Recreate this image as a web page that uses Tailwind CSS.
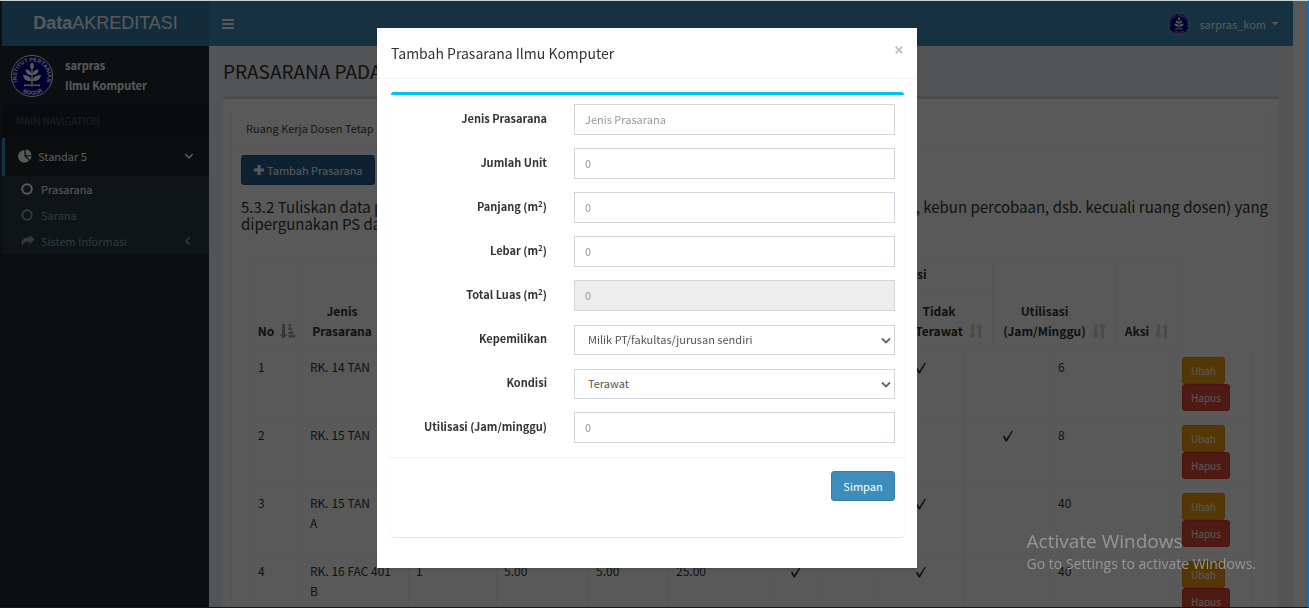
<!DOCTYPE html>
<html lang="id">
<head>
<meta charset="utf-8">
<meta name="viewport" content="width=device-width, initial-scale=1">
<title>DataAKREDITASI</title>
<script src="https://cdn.jsdelivr.net/npm/@tailwindcss/browser@4"></script>
</head>
<body class="h-screen overflow-hidden bg-[#222d32] font-['Noto_Sans_CJK_SC','Noto_Sans',sans-serif] text-[11px] leading-5 text-[#333]">

<svg class="hidden" aria-hidden="true">
  <symbol id="seal" viewBox="0 0 42 42">
    <circle cx="21" cy="21" r="20.500" fill="#00008b" stroke="#fff" stroke-width="1"/>
    <path id="arcTop" d="M7.500 29.500 A15.500 15.500 0 1 1 34.500 29.500" fill="none"/>
    <path id="arcBottom" d="M9 35.500 A19 19 0 0 0 33 35.500" fill="none"/>
    <text font-size="5.500" fill="#fff" font-family="Liberation Sans"><textPath href="#arcTop" startOffset="5%">INSTITUT PERTANIAN</textPath></text>
    <text font-size="5.500" fill="#fff" font-family="Liberation Sans"><textPath href="#arcBottom" startOffset="13%">BOGOR</textPath></text>
    <g fill="#fff">
      <path d="M20.300 14h1.400v16h-1.400z"/>
      <path d="M21 7.500c2.600 2 2.600 5 0 7c-2.600-2-2.600-5 0-7z"/>
      <path d="M20.500 20c-3.500 0-6-2-6-5.500c3.500 0 6 2 6 5.500zM21.500 20c3.500 0 6-2 6-5.500c-3.500 0-6 2-6 5.500z"/>
      <path d="M20.500 26c-5 .5-8-2-8.500-6c5 0 8 2 8.500 6zM21.500 26c5 .5 8-2 8.500-6c-5 0-8 2-8.500 6z"/>
      <path d="M13 30q4-1.500 8 0q4-1.500 8 0v1.400q-4-1.500-8 .2q-4-1.700-8-.2z"/>
    </g>
  </symbol>
  <symbol id="sort" viewBox="0 0 14 16">
    <path d="M2 1h3v10.500h2.500L3.500 15.500L-.5 11.500H2zM9 15.500h3V4.500h2.500L10.500.5L6.500 4.500H9z"/>
  </symbol>
  <symbol id="sort-asc" viewBox="0 0 15 16">
    <path d="M2 1h3v10.500h2.500L3.500 15.500L-.5 11.500H2zM8.500 1h2.500v2.500H8.500zM8.500 4.500h3.500v2.500H8.500zM8.500 8.500h5v2.500h-5zM8.500 12h6.500v2.500H8.500z"/>
  </symbol>
  <symbol id="check" viewBox="0 0 12 12">
    <path d="M.8 6.500L2.400 5.800L4.300 9L9.800.8L11 1L5 11.500L3.700 11.500z" fill="#333"/>
  </symbol>
</svg>

<div class="flex h-full border-t border-r border-b border-l-2 border-transparent">
  <aside class="w-[207px] shrink-0 bg-[#222d32]">
    <a href="#" class="flex h-[45px] items-center justify-center bg-[#367fa9] pb-0.5 font-['Liberation_Sans',sans-serif] text-lg text-white"><b>Data</b>AKREDITASI</a>
    <div class="flex h-[59px] items-center gap-3 px-[9px] font-bold text-white">
      <svg class="size-[42px]" role="img" aria-label="Logo"><use href="#seal"/></svg>
      <div class="pb-0.5"><p>sarpras</p><p>Ilmu Komputer</p></div>
    </div>
    <nav>
      <h2 class="flex h-[33px] items-center bg-[#1a2226] pb-0.5 pl-[14px] text-[10px] text-[#4b646f]">MAIN NAVIGATION</h2>
      <a href="#" class="flex h-[38px] items-center border-l-3 border-[#3c8dbc] bg-[#1e282c] pr-[15px] pb-0.5 pl-[13px] text-white">
        <svg class="mr-1.5 size-[14px]" viewBox="0 0 14 14" fill="#fff"><path d="M6.500 1v6.300l4.500 4.300A6.300 6.300 0 1 1 6.500 1z"/><path d="M7.800.5a6.200 6.200 0 0 1 5.700 5.800H7.800z"/><path d="M8.600 7.300H13.500A6 6 0 0 1 12 10.900z"/></svg>
        <span class="grow">Standar 5</span>
        <svg class="size-[10px]" viewBox="0 0 10 10" fill="none" stroke="#fff" stroke-width="1.700"><path d="M1.200 3L5 6.800L8.800 3"/></svg>
      </a>
      <ul class="bg-[#2c3b41] text-[#8aa4af]">
        <li><a href="#" class="flex h-[26px] items-center gap-2 pl-[19px] text-white"><svg class="size-3" viewBox="0 0 12 12" fill="none" stroke="currentColor" stroke-width="2"><circle cx="6" cy="6" r="4.800"/></svg>Prasarana</a></li>
        <li><a href="#" class="flex h-[26px] items-center gap-2 pl-[19px]"><svg class="size-3" viewBox="0 0 12 12" fill="none" stroke="currentColor" stroke-width="2"><circle cx="6" cy="6" r="4.800"/></svg>Sarana</a></li>
        <li><a href="#" class="flex h-[26px] items-center gap-1.5 pr-4 pl-[19px]"><svg class="h-3 w-[14px]" viewBox="0 0 14 12" fill="currentColor"><path d="M8.500 0L13.800 4.500L8.500 9.500V6.800C4.500 6.800 2 7.500 1.500 11.500C-1 6 2 2.500 8.500 2.500z"/></svg><span class="grow">Sistem Informasi</span><svg class="size-[10px]" viewBox="0 0 10 10" fill="none" stroke="currentColor" stroke-width="1.400"><path d="M6.800 1.200L3 5L6.800 8.800"/></svg></a></li>
      </ul>
    </nav>
  </aside>

  <div class="flex min-w-0 grow flex-col bg-[#ecf0f5]">
    <header class="flex h-[45px] shrink-0 items-center justify-between bg-[#3c8dbc] pr-[14px] pl-[13px] text-white">
      <button type="button" aria-label="Menu"><svg class="h-[10px] w-3" viewBox="0 0 12 10" fill="#fff"><path d="M0 0h12v2H0zM0 4h12v2H0zM0 8h12v2H0z"/></svg></button>
      <button type="button" class="flex items-center"><svg class="mr-[9px] size-[22px]"><use href="#seal"/></svg>sarpras_kom<svg class="ml-[5px] h-1 w-2" viewBox="0 0 8 4" fill="#fff"><path d="M.5 0h7L4 3.500z"/></svg></button>
    </header>
    <main class="min-h-0 grow overflow-hidden px-[14px]">
      <h1 class="mt-3 mb-3 h-[26px] text-[19px] leading-[26px] whitespace-nowrap">PRASARANA PADA PROGRAM STUDI ILMU KOMPUTER</h1>
      <section class="rounded-[3px] border-t-3 border-[#d2d6de] bg-white px-2 pt-[11px] pb-8">
        <div class="border-x border-[#f4f4f4]">
          <div class="flex h-9 items-center border-b border-[#f4f4f4] pl-[14px] text-[#444]"><a href="#">Ruang Kerja Dosen Tetap</a></div>
          <div class="pt-[9px] pl-[9px]">
            <button type="button" class="flex h-[30px] items-center gap-0.5 rounded-[3px] border border-[#204d74] bg-[#286090] px-[11px] text-white"><svg class="size-3" viewBox="0 0 12 12" fill="#fff"><path d="M4.500 1h3v3.500H11v3H7.500V11h-3V7.500H1v-3h3.500z"/></svg>Tambah Prasarana</button>
            <p class="mt-[13px] text-[15px] leading-[17px]">5.3.2 Tuliskan data prasarana (kantor, ruang kelas, ruang laboratorium, aula, ruang perpustakaan, kebun percobaan, dsb. kecuali ruang dosen) yang dipergunakan PS dalam proses belajar mengajar</p>
            <div class="mt-[25px] ml-[9px] text-[12px]">
              <table class="w-[928px] table-fixed border-separate border-spacing-0 border-t border-l border-[#f4f4f4] text-center font-bold [&_th]:border-r [&_th]:border-b [&_th]:border-[#f4f4f4] [&_th]:px-0 [&_th]:align-bottom [&_svg]:ml-1.5 [&_svg]:inline [&_svg]:align-text-bottom [&_svg]:fill-[#d6d6d6]">
                <colgroup><col class="w-[52px]"><col class="w-[99px]"><col class="w-[95px]"><col class="w-[92px]"><col class="w-[80px]"><col class="w-[148px]"><col class="w-[89px]"><col class="w-[87px]"><col class="w-[124px]"><col></colgroup>
                <thead>
                  <tr class="h-[35px]">
                    <th rowspan="2" class="pb-2">No<svg class="h-4 w-[15px] brightness-75"><use href="#sort-asc"/></svg></th>
                    <th rowspan="2" class="pb-2"><span class="mr-5">Jenis</span><br>Prasarana<svg class="h-4 w-[14px]"><use href="#sort"/></svg></th>
                    <th rowspan="2" class="pb-2">Unit</th>
                    <th rowspan="2" class="pb-2">Panjang</th>
                    <th rowspan="2" class="pb-2">Lebar</th>
                    <th rowspan="2" class="pb-2">Kepemilikan</th>
                    <th colspan="2" class="pb-2">Kondisi</th>
                    <th rowspan="2" class="pb-2"><span class="mr-5">Utilisasi</span><br>(Jam/Minggu)<svg class="h-4 w-[14px]"><use href="#sort"/></svg></th>
                    <th rowspan="2" class="pb-2">Aksi<svg class="h-4 w-[14px]"><use href="#sort"/></svg></th>
                  </tr>
                  <tr class="h-[57px]">
                    <th class="pb-2">Terawat</th>
                    <th class="pb-2"><span class="mr-5">Tidak</span><br>Terawat<svg class="h-4 w-[14px]"><use href="#sort"/></svg></th>
                  </tr>
                </thead>
              </table>
              <table class="w-[1002px] table-fixed border-separate border-spacing-0 border-l border-[#f4f4f4] [&_td]:h-[68px] [&_td]:border-r [&_td]:border-b [&_td]:border-[#f4f4f4] [&_td]:px-[7px] [&_td]:pt-[7px] [&_td]:align-top [&_td>svg]:mx-auto [&_td>svg]:mt-[5px] [&_td>svg]:size-3 [&_button]:block [&_button]:rounded-[3px] [&_button]:border [&_button]:px-2 [&_button]:text-[10px] [&_button]:leading-[25px] [&_button]:text-white">
                <colgroup><col class="w-[52px]"><col class="w-[106px]"><col class="w-[88px]"><col class="w-[92px]"><col class="w-[80px]"><col class="w-[101px]"><col class="w-[53px]"><col class="w-[55px]"><col class="w-[87px]"><col class="w-[86px]"><col class="w-[124px]"><col></colgroup>
                <tbody>
                  <tr><td>1</td><td>RK. 14 TAN</td><td>1</td><td>5.00</td><td>5.00</td><td>25.00</td><td><svg><use href="#check"/></svg></td><td></td><td><svg><use href="#check"/></svg></td><td></td><td>6</td><td><button type="button" class="border-[#e08e0b] bg-[#f39c12]">Ubah</button><button type="button" class="border-[#d73925] bg-[#dd4b39]">Hapus</button></td></tr>
                  <tr><td>2</td><td>RK. 15 TAN</td><td>1</td><td>5.00</td><td>5.00</td><td>25.00</td><td><svg><use href="#check"/></svg></td><td></td><td></td><td><svg><use href="#check"/></svg></td><td>8</td><td><button type="button" class="border-[#e08e0b] bg-[#f39c12]">Ubah</button><button type="button" class="border-[#d73925] bg-[#dd4b39]">Hapus</button></td></tr>
                  <tr><td>3</td><td>RK. 15 TAN<br>A</td><td>1</td><td>5.00</td><td>5.00</td><td>25.00</td><td><svg><use href="#check"/></svg></td><td></td><td><svg><use href="#check"/></svg></td><td></td><td>40</td><td><button type="button" class="border-[#e08e0b] bg-[#f39c12]">Ubah</button><button type="button" class="border-[#d73925] bg-[#dd4b39]">Hapus</button></td></tr>
                  <tr><td>4</td><td>RK. 16 FAC 401<br>B</td><td>1</td><td>5.00</td><td>5.00</td><td>25.00</td><td><svg><use href="#check"/></svg></td><td></td><td><svg><use href="#check"/></svg></td><td></td><td>40</td><td><button type="button" class="border-[#e08e0b] bg-[#f39c12]">Ubah</button><button type="button" class="border-[#d73925] bg-[#dd4b39]">Hapus</button></td></tr>
                </tbody>
              </table>
            </div>
          </div>
        </div>
      </section>
    </main>
  </div>
  <div class="w-[15px] shrink-0 bg-white"></div>
</div>

<div class="fixed inset-0 flex items-start justify-center overflow-hidden bg-black/65 pt-7 pr-[15px]">
  <form role="dialog" aria-labelledby="dialog-title" class="w-full max-w-[540px] bg-white pb-[31px] shadow-[0_2px_3px_rgba(0,0,0,0.125)]">
    <div class="flex h-[51px] items-center justify-between border-b border-[#f4f4f4] px-[14px]">
      <h2 id="dialog-title" class="text-[14px]">Tambah Prasarana Ilmu Komputer</h2>
      <button type="button" aria-label="Tutup" class="mb-1.5"><svg class="size-2" viewBox="0 0 8 8" stroke="#c4c4c4" stroke-width="2"><path d="M.8.8L7.200 7.200M7.200.8L.8 7.200"/></svg></button>
    </div>
    <div class="mt-[13px] mr-[13px] ml-[14px] rounded-[3px] border-t-3 border-[#00c0ef] pb-9 shadow-[0_1px_1px_rgba(0,0,0,0.1),0_0_1px_rgba(0,0,0,0.1)]">
      <div class="flex flex-col gap-[13px] px-[9px] pt-[9px] [&_input]:h-[31px] [&_input]:min-w-0 [&_input]:grow [&_input]:border [&_input]:border-[#d2d6de] [&_input]:px-[10px] [&_input]:pb-0.5 [&_input]:placeholder-[#999] [&_label]:w-[147px] [&_label]:shrink-0 [&_label]:self-center [&_label]:pb-[3px] [&_label]:text-right [&_label]:font-bold [&_select]:block [&_select]:h-[30px] [&_select]:w-full [&_select]:appearance-none [&_select]:border [&_select]:border-[#d2d6de] [&_select]:bg-white [&_select]:px-[13px] [&_select]:pb-0.5 [&_select]:text-[#555] [&_sup]:text-[8px] [&>div]:flex [&>div]:h-[31px] [&>div]:items-end [&>div]:gap-[27px]">
        <div><label for="jenis">Jenis Prasarana</label><input id="jenis" type="text" placeholder="Jenis Prasarana"></div>
        <div><label for="unit">Jumlah Unit</label><input id="unit" type="text" placeholder="0"></div>
        <div><label for="panjang">Panjang (m<sup>2</sup>)</label><input id="panjang" type="text" placeholder="0"></div>
        <div><label for="lebar">Lebar (m<sup>2</sup>)</label><input id="lebar" type="text" placeholder="0"></div>
        <div><label for="luas">Total Luas (m<sup>2</sup>)</label><input id="luas" type="text" placeholder="0" disabled class="bg-[#eee]"></div>
        <div><label for="milik">Kepemilikan</label><div class="relative grow"><select id="milik"><option>Milik PT/fakultas/jurusan sendiri</option></select><svg class="pointer-events-none absolute top-[11px] right-1 size-[10px]" viewBox="0 0 10 10" fill="none" stroke="#666" stroke-width="1.800"><path d="M1 2.500L5 6.500L9 2.500"/></svg></div></div>
        <div><label for="kondisi">Kondisi</label><div class="relative grow"><select id="kondisi"><option>Terawat</option></select><svg class="pointer-events-none absolute top-[11px] right-1 size-[10px]" viewBox="0 0 10 10" fill="none" stroke="#666" stroke-width="1.800"><path d="M1 2.500L5 6.500L9 2.500"/></svg></div></div>
        <div><label for="utilisasi">Utilisasi (Jam/minggu)</label><input id="utilisasi" type="text" placeholder="0"></div>
      </div>
      <div class="-mx-1 mt-[14px] flex justify-end border-t border-[#f4f4f4] pt-[13px] pr-[13px]">
        <button type="submit" class="h-[30px] w-16 rounded-[3px] border border-[#367fa9] bg-[#3c8dbc] text-white">Simpan</button>
      </div>
    </div>
  </form>
</div>

<div class="pointer-events-none absolute right-[53px] bottom-[34px] font-['Open_Sans',sans-serif] text-[#979797]">
  <p class="text-[19px] leading-[25px]">Activate Windows</p>
  <p class="text-[14px] leading-5">Go to Settings to activate Windows.</p>
</div>
<div class="pointer-events-none fixed inset-0 border-t border-r border-b border-t-[#c8d4d4] border-r-[#0078d7] border-b-[#101828]"></div>
</body>
</html>
